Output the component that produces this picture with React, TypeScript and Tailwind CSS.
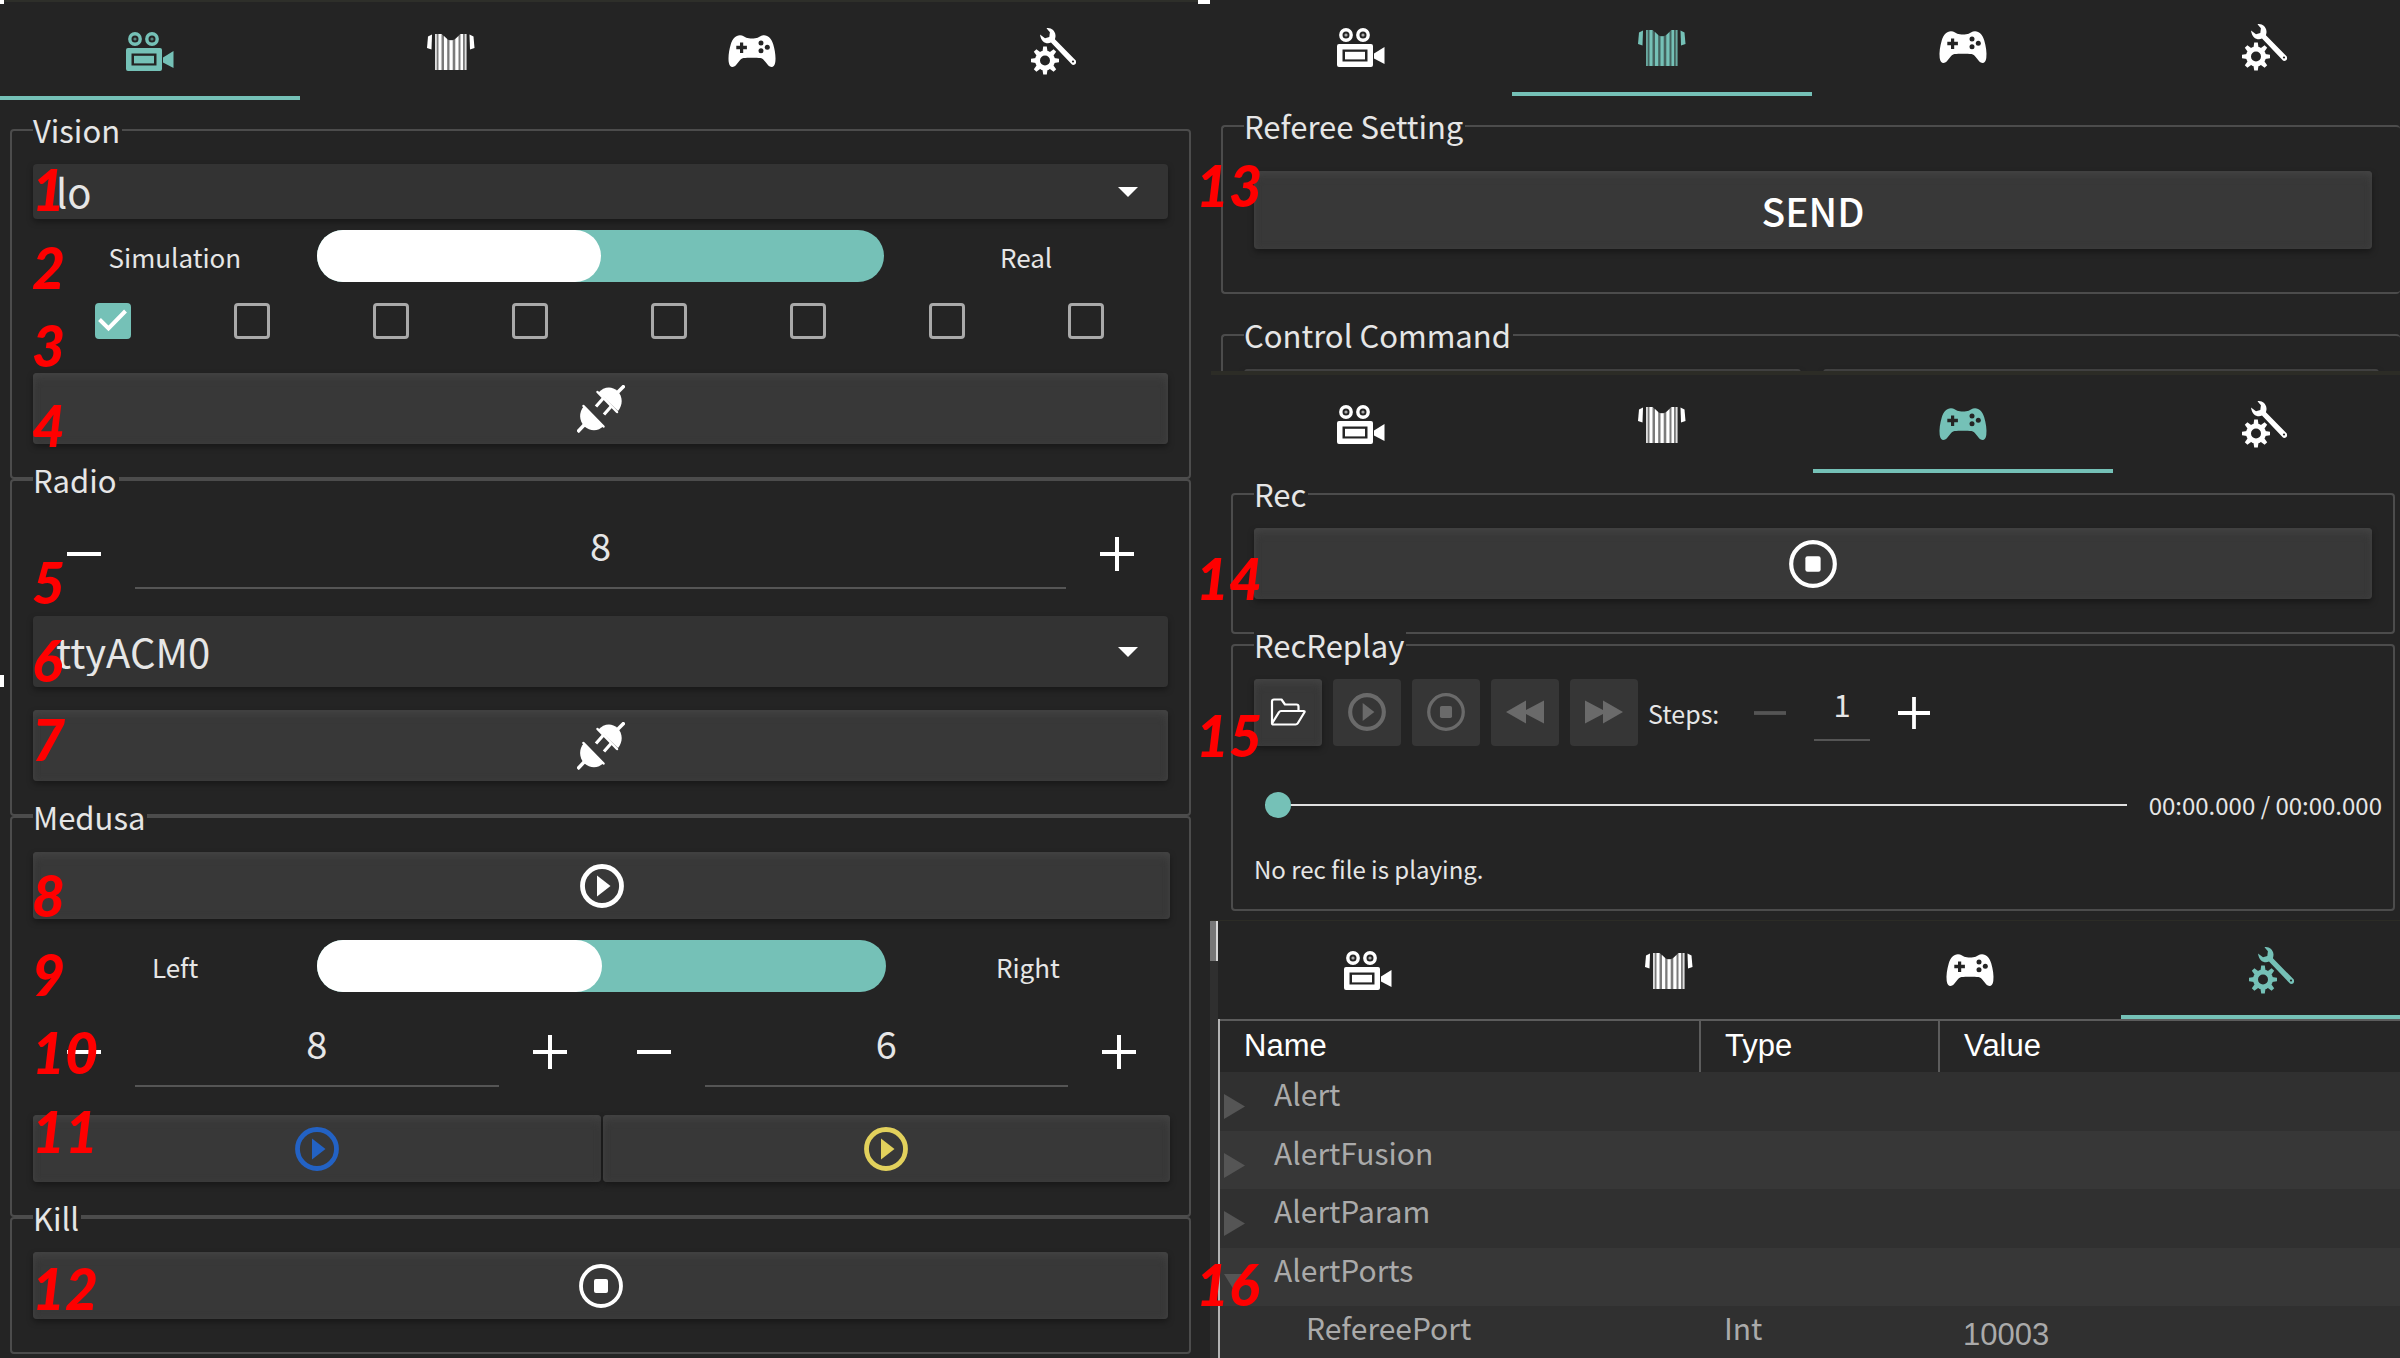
import { useState } from "react";
import type { ReactNode } from "react";

type IconProps = { className?: string };

function CameraIcon({ className = "size-12" }: IconProps) {
  return (
    <svg viewBox="0 0 48 48" className={className} fill="currentColor" aria-hidden="true">
      <circle cx="9" cy="12" r="5.2" fill="none" stroke="currentColor" strokeWidth="3.4" />
      <circle cx="9" cy="12" r="1.6" opacity=".6" />
      <circle cx="26" cy="12" r="5.2" fill="none" stroke="currentColor" strokeWidth="3.4" />
      <circle cx="26" cy="12" r="1.6" opacity=".6" />
      <path
        fillRule="evenodd"
        d="M2 21h32a2 2 0 0 1 2 2v19a2 2 0 0 1-2 2H2a2 2 0 0 1-2-2V23a2 2 0 0 1 2-2zM5.5 26.5v12h25v-12z"
      />
      <rect x="8" y="28.8" width="20" height="7.6" />
      <path d="M37 30.5l10.5-6.5v17L37 35.500z" />
    </svg>
  );
}

function JerseyIcon({ className = "size-12" }: IconProps) {
  return (
    <svg viewBox="0 0 48 48" className={className} fill="currentColor" aria-hidden="true">
      <path d="M5 7.500L1 9.500 0 21l4.500 1.500z" />
      <path d="M42.500 7.500l4 2L47.500 21 43 22.500z" />
      <path opacity=".4" d="M8 7h6.500c3 2 4 6.200 9.500 6.200s6.500-4.200 9.500-6.200H39.500V43H8z" />
      <path opacity=".75" d="M8 7h1.800v36H8zM37.800 7h1.700v36h-1.700z" />
      <path d="M11.500 7h3V43h-3zM17 9l3.200 3V43H17zM22.500 13.200h3.200V43h-3.200zM28.300 12l3.200-3V43h-3.200zM33.500 7h2.500V43h-2.500z" />
    </svg>
  );
}

function GamepadIcon({ className = "size-12" }: IconProps) {
  return (
    <svg viewBox="0 0 48 48" className={className} fill="currentColor" aria-hidden="true">
      <path
        fillRule="evenodd"
        d="M12 8.300c3 0 4.500 1.500 6.300 2.500 3 .9 8.400.9 11.400 0 1.800-1 3.300-2.500 6.300-2.500 4.500 0 7.500 3.500 9.200 9 1.700 5.500 2.800 12.700 2.100 17.700-.5 3.600-1.800 5-3.800 5-2.500 0-4-2.500-6-5-1.700-2.100-3-3.800-5-4-4-.4-13-.4-17 0-2 .2-3.300 1.900-5 4-2 2.500-3.500 5-6 5-2 0-3.300-1.400-3.800-5-.7-5 .4-12.200 2.100-17.700 1.700-5.500 4.700-9 9.200-9zM12 15.500v3.200H8.300v3.600H12v3.600h3.200v-3.600h3.700v-3.600h-3.700v-3.200z"
      />
      <g fill="#242424">
        <circle cx="33" cy="16" r="2.500" />
        <circle cx="39.300" cy="20.300" r="2.500" />
        <circle cx="33" cy="23.800" r="2.500" />
      </g>
    </svg>
  );
}

const gearTeeth = [0, 45, 90, 135, 180, 225, 270, 315];

function ToolsIcon({ className = "size-12" }: IconProps) {
  return (
    <svg viewBox="0 0 48 48" className={className} fill="currentColor" aria-hidden="true">
      <circle cx="16" cy="33.500" r="7.500" fill="none" stroke="currentColor" strokeWidth="5" />
      {gearTeeth.map((a) => (
        <path key={a} d="M14.200 19.500h3.600l.7 5h-5z" transform={`rotate(${a} 16 33.500)`} />
      ))}
      <path d="M17.500 1.200c4.600-.8 8.700 2.600 9 7.200.1 1.500-.3 2.800-.6 3.800L46.800 33.600c1 3.300-.6 4.800-3.600 4.200L22 15.600c-4.500 2-10-.5-11-8.200l5 3.800 4.300-1.300.6-4.700z" />
      <circle cx="44" cy="34.500" r="1.100" fill="#242424" />
    </svg>
  );
}

function PlugIcon({ className = "size-12" }: IconProps) {
  return (
    <svg viewBox="0 0 48 48" className={className} fill="currentColor" stroke="currentColor" aria-hidden="true">
      <path strokeWidth="2.500" strokeLinecap="round" d="M6.500 21L26.500 41.500" />
      <path stroke="none" d="M7 21l19.500 20c-5 5.500-13.500 5.500-19 .5C2 36 1.500 27 7 21z" />
      <path strokeWidth="3.500" d="M9 38l-8.500 9" />
      <path strokeWidth="2.500" strokeLinecap="round" d="M20.500 7L40 27" />
      <path stroke="none" d="M21.500 7.500c5-6 13.500-7 19-1.500s5.500 14 .5 20z" />
      <path strokeWidth="3.500" d="M38 10l9.500-9.500" />
      <path strokeWidth="3.200" d="M26.500 13L19 21.500M34.500 21L27 29.500" />
    </svg>
  );
}

function PlayIcon({ className = "size-11" }: IconProps) {
  return (
    <svg viewBox="0 0 44 44" className={className} fill="currentColor" aria-hidden="true">
      <circle cx="22" cy="22" r="19.500" fill="none" stroke="currentColor" strokeWidth="4.800" />
      <path d="M17 11.500L30.500 22 17 32.500z" />
    </svg>
  );
}

function StopIcon({ className = "size-11" }: IconProps) {
  return (
    <svg viewBox="0 0 44 44" className={className} fill="currentColor" aria-hidden="true">
      <circle cx="22" cy="22" r="20" fill="none" stroke="currentColor" strokeWidth="3.800" />
      <rect x="15" y="15" width="14" height="14" rx="2" />
    </svg>
  );
}

function RewindIcon() {
  return (
    <svg viewBox="0 0 38 24" className="h-6 w-[38px]" fill="currentColor" aria-hidden="true">
      <path d="M0 12L20 .500v9.500L38 .500v23L20 14v9.500z" />
    </svg>
  );
}

function ForwardIcon() {
  return (
    <svg viewBox="0 0 38 24" className="h-6 w-[38px]" fill="currentColor" aria-hidden="true">
      <path d="M38 12L18 .500v9.500L0 .500v23L18 14v9.500z" />
    </svg>
  );
}

function FolderIcon() {
  return (
    <svg
      viewBox="0 0 36 28"
      className="h-7 w-9"
      fill="none"
      stroke="currentColor"
      strokeWidth="2.200"
      strokeLinejoin="round"
      aria-hidden="true"
    >
      <path d="M2 25V3.500Q2 1.500 4 1.500h7.500l3.500 5h11.500Q28.500 6.500 28.500 8.500V13" />
      <path d="M2 25.500L9 14.200Q9.700 13 11 13h22.500q1.700 0 .8 1.500l-6.500 10.700q-.8 1.300-2.200 1.300H3.500Q2 26.500 2 25z" />
    </svg>
  );
}

const tabs = [
  { label: "Vision", Icon: CameraIcon },
  { label: "Referee", Icon: JerseyIcon },
  { label: "Gamepad", Icon: GamepadIcon },
  { label: "Settings", Icon: ToolsIcon },
];

function TabBar({ active }: { active: number }) {
  return (
    <div role="tablist" className="flex h-24 shrink-0 overflow-hidden">
      {tabs.map(({ label, Icon }, i) => (
        <button
          key={label}
          type="button"
          role="tab"
          aria-label={label}
          aria-selected={i === active}
          className={`mr-px flex min-w-[300px] flex-1 items-center justify-center border-b-4 pt-px ${
            i === active ? "border-[#75c1b7] text-[#75c1b7]" : "border-transparent text-white"
          }`}
        >
          <Icon />
        </button>
      ))}
    </div>
  );
}

function Group({ title, className = "", children }: { title: string; className?: string; children: ReactNode }) {
  return (
    <fieldset className={`min-w-0 rounded-[4px] border-2 border-[#4c4c4c] px-[21px] ${className}`}>
      <legend className="bg-[#242424] pr-0.5 text-[31px] leading-7 text-[#e6e6e6]">{title}</legend>
      {children}
    </fieldset>
  );
}

const raised =
  "bg-[#383838] shadow-[inset_0_6px_8px_-2px_#434343,inset_0_0_6px_#3f3f3f,0_3px_6px_rgba(0,0,0,0.35)]";

function PushButton({ label, className = "", children }: { label: string; className?: string; children: ReactNode }) {
  return (
    <button
      type="button"
      aria-label={label}
      className={`flex w-full items-center justify-center rounded-[4px] text-white ${raised} ${className}`}
    >
      {children}
    </button>
  );
}

function Dropdown({ label, value, className = "" }: { label: string; value: string; className?: string }) {
  return (
    <div className={`relative ${className}`}>
      <select
        aria-label={label}
        className="size-full appearance-none rounded-[4px] bg-[#333333] pb-0.5 pl-[23px] text-[40px] leading-[50px] text-[#e6e6e6] shadow-[0_3px_6px_rgba(0,0,0,0.35)]"
      >
        <option>{value}</option>
      </select>
      <svg
        viewBox="0 0 20 10"
        className="pointer-events-none absolute top-1/2 right-[30px] h-2.5 w-5 -translate-y-1/2 text-white"
        fill="currentColor"
        aria-hidden="true"
      >
        <path d="M0 0h20L10 10z" />
      </svg>
    </div>
  );
}

function SwitchRow({ left, right, className = "" }: { left: string; right: string; className?: string }) {
  const [on, setOn] = useState(false);
  return (
    <div className={`grid grid-cols-[1fr_2fr_1fr] items-center text-center text-[26px] leading-8 text-[#e6e6e6] ${className}`}>
      <span className="pt-0.5">{left}</span>
      <button
        type="button"
        role="switch"
        aria-checked={on}
        aria-label={`${left} or ${right}`}
        onClick={() => setOn(!on)}
        className={`flex h-[52px] rounded-full bg-[#75c1b7] ${on ? "justify-end" : "justify-start"}`}
      >
        <span className="h-full w-1/2 rounded-full bg-white" />
      </button>
      <span className="pt-0.5">{right}</span>
    </div>
  );
}

function Cross({ plus, className }: { plus: boolean; className: string }) {
  return (
    <svg viewBox="0 0 34 34" className={className} stroke="currentColor" strokeWidth="4" aria-hidden="true">
      <path d={plus ? "M0 17h34M17 0v34" : "M0 17h34"} />
    </svg>
  );
}

function Spinner({ label, initial, className = "" }: { label: string; initial: number; className?: string }) {
  const [value, setValue] = useState(initial);
  return (
    <div className={`flex h-[70px] text-white ${className}`}>
      <button type="button" aria-label={`Decrease ${label}`} onClick={() => setValue(value - 1)} className="flex w-[102px] items-center justify-center">
        <Cross plus={false} className="size-[34px]" />
      </button>
      <input
        aria-label={label}
        value={value}
        onChange={(e) => setValue(Number(e.target.value) || 0)}
        className="min-w-0 flex-1 border-b-2 border-[#555555] pb-[18px] text-center text-[38px] text-[#e6e6e6] outline-none"
      />
      <button type="button" aria-label={`Increase ${label}`} onClick={() => setValue(value + 1)} className="flex w-[102px] items-center justify-center">
        <Cross plus className="size-[34px]" />
      </button>
    </div>
  );
}

function CameraCheck({ index }: { index: number }) {
  const [on, setOn] = useState(index === 0);
  return (
    <label className="relative flex size-9 items-center justify-center">
      <input
        type="checkbox"
        aria-label={`Camera ${index}`}
        checked={on}
        onChange={() => setOn(!on)}
        className="size-9 appearance-none rounded-[4px] border-[3px] border-[#a9a9a9] checked:border-[#75c1b7] checked:bg-[#75c1b7]"
      />
      {on && (
        <svg viewBox="0 0 36 36" className="pointer-events-none absolute inset-0" fill="none" stroke="#ffffff" strokeWidth="4" aria-hidden="true">
          <path d="M4.500 16.500l9 9L30.500 8" />
        </svg>
      )}
    </label>
  );
}

function VisionPanel() {
  return (
    <section className="w-1/2 shrink-0 border-t-2 border-[#2e2f2a] pt-0.5">
      <TabBar active={0} />
      <div className="mr-[9px] ml-2.5 pt-4">
        <Group title="Vision" className="pb-[33px]">
          <Dropdown label="Network interface" value="lo" className="mt-5 h-[55px]" />
          <SwitchRow left="Simulation" right="Real" className="mt-[11px]" />
          <div className="mt-[21px] grid grid-cols-8 justify-items-center pr-3 pl-2.5">
            {[0, 1, 2, 3, 4, 5, 6, 7].map((i) => (
              <CameraCheck key={i} index={i} />
            ))}
          </div>
          <PushButton label="Connect vision" className="mt-[34px] h-[71px]">
            <PlugIcon />
          </PushButton>
        </Group>
        <Group title="Radio" className="-mt-[13px] pb-[33px]">
          <Spinner label="Radio channel" initial={8} className="mt-[25px]" />
          <Dropdown label="Serial port" value="ttyACM0" className="mt-[27px] h-[71px]" />
          <PushButton label="Connect radio" className="mt-[23px] h-[71px]">
            <PlugIcon />
          </PushButton>
        </Group>
        <Group title="Medusa" className="-mt-[13px] pb-[33px]">
          <div className="-mr-0.5">
            <PushButton label="Start Medusa" className="mt-[21px] h-[67px]">
              <PlayIcon />
            </PushButton>
            <SwitchRow left="Left" right="Right" className="mt-[21px]" />
            <div className="mt-[25px] grid grid-cols-2 gap-0.5">
              <Spinner label="Blue robots" initial={8} />
              <Spinner label="Yellow robots" initial={6} />
            </div>
            <div className="mt-7 grid grid-cols-2 gap-0.5">
              <PushButton label="Start blue" className="h-[67px]">
                <PlayIcon className="size-11 text-[#2362c4]" />
              </PushButton>
              <PushButton label="Start yellow" className="h-[67px]">
                <PlayIcon className="size-11 text-[#e2d15c]" />
              </PushButton>
            </div>
          </div>
        </Group>
        <Group title="Kill" className="-mt-[13px] pb-[33px]">
          <PushButton label="Kill all" className="mt-5 h-[67px]">
            <StopIcon />
          </PushButton>
        </Group>
      </div>
    </section>
  );
}

function RefereePanel() {
  return (
    <section className="h-[375px] shrink-0 overflow-hidden border-b-4 border-[#2c2c26]">
      <TabBar active={1} />
      <div className="ml-2.5 pt-4">
        <Group title="Referee Setting" className="border-r-0 pb-[43px]">
          <div className="mr-[7px] ml-2.5 pt-[31px]">
            <PushButton label="Send" className="h-[78px] text-[39px] font-medium">
              SEND
            </PushButton>
          </div>
        </Group>
        <Group title="Control Command" className="mt-[27px] border-r-0 pb-[43px]">
          <div className="mt-5 grid grid-cols-2 gap-[22px]">
            <PushButton label="Halt" className="h-[78px]">
              {null}
            </PushButton>
            <PushButton label="Stop" className="h-[78px]">
              {null}
            </PushButton>
          </div>
        </Group>
      </div>
    </section>
  );
}

function ToolButton({ label, disabled = false, children }: { label: string; disabled?: boolean; children: ReactNode }) {
  return (
    <button
      type="button"
      aria-label={label}
      disabled={disabled}
      className={`flex h-[67px] w-[68px] items-center justify-center rounded-[4px] pb-0.5 ${
        disabled ? "bg-[#363636] text-[#6a6a6a]" : `text-white ${raised}`
      }`}
    >
      {children}
    </button>
  );
}

function RecordPanel() {
  const [pos, setPos] = useState(0);
  return (
    <section className="shrink-0 pt-0.5">
      <TabBar active={2} />
      <div className="mr-[5px] ml-5 pt-[7px]">
        <Group title="Rec" className="pb-[33px]">
          <PushButton label="Stop recording" className="mt-5 h-[71px]">
            <StopIcon className="size-12" />
          </PushButton>
        </Group>
        <Group title="RecReplay" className="-mt-[3px] pb-[26px]">
          <div className="mt-5 flex items-center text-white">
            <div className="flex gap-[11px]">
              <ToolButton label="Open record">
                <FolderIcon />
              </ToolButton>
              <ToolButton label="Play" disabled>
                <PlayIcon className="size-[38px]" />
              </ToolButton>
              <ToolButton label="Stop" disabled>
                <StopIcon className="size-[38px]" />
              </ToolButton>
              <ToolButton label="Rewind" disabled>
                <RewindIcon />
              </ToolButton>
              <ToolButton label="Forward" disabled>
                <ForwardIcon />
              </ToolButton>
            </div>
            <label htmlFor="steps" className="ml-2.5 w-[88px] text-[25px] leading-8 text-[#e6e6e6]">
              Steps:
            </label>
            <button type="button" aria-label="Fewer steps" disabled className="mr-2.5 flex h-[67px] w-[68px] items-center justify-center text-[#555555]">
              <Cross plus={false} className="size-8" />
            </button>
            <input
              id="steps"
              defaultValue="1"
              className="-mt-1 h-[60px] w-14 border-b-2 border-[#555555] pb-3 text-center text-[31px] text-[#e6e6e6] outline-none"
            />
            <button type="button" aria-label="More steps" className="ml-2.5 flex h-[67px] w-[68px] items-center justify-center">
              <Cross plus className="size-8" />
            </button>
          </div>
          <div className="-mr-2.5 mt-[45px] flex h-7 items-center gap-[22px] pl-[11px] text-[24px] leading-7 text-[#e6e6e6]">
            <input
              type="range"
              aria-label="Playback position"
              min={0}
              max={100}
              value={pos}
              onChange={(e) => setPos(Number(e.target.value))}
              className="h-7 min-w-0 flex-1 appearance-none bg-transparent [&::-webkit-slider-runnable-track]:h-0.5 [&::-webkit-slider-runnable-track]:bg-[#e0e0e0] [&::-webkit-slider-thumb]:-mt-3 [&::-webkit-slider-thumb]:size-[26px] [&::-webkit-slider-thumb]:appearance-none [&::-webkit-slider-thumb]:rounded-full [&::-webkit-slider-thumb]:bg-[#75c1b7]"
            />
            <span className="whitespace-nowrap">00:00.000 / 00:00.000</span>
          </div>
          <p className="mt-9 text-[24px] leading-7 text-[#e6e6e6]">No rec file is playing.</p>
        </Group>
      </div>
    </section>
  );
}

const settings = [
  { name: "Alert", open: false },
  { name: "AlertFusion", open: false },
  { name: "AlertParam", open: false },
  { name: "AlertPorts", open: true },
];

function SettingsPanel() {
  return (
    <section className="mt-[9px] flex min-h-0 flex-1 border-t border-[#2c2c26]">
      <div className="-ml-px w-2 shrink-0 bg-[#2f2f2f]">
        <div className="h-10 border-r-2 border-[#d8d8d8] bg-[#777777]" />
      </div>
      <div className="flex min-w-0 flex-1 flex-col pt-0.5">
        <TabBar active={3} />
        <div className="min-h-0 flex-1 overflow-hidden border-l-2 border-[#b4b4b4]">
          <table className="w-full table-fixed border-collapse text-left text-[30px] text-[#aaaaaa]">
            <colgroup>
              <col className="w-[480px]" />
              <col className="w-[239px]" />
              <col />
            </colgroup>
            <thead>
              <tr className="h-[52px] bg-[#262626] font-[Liberation_Sans] text-[31px] text-white">
                <th className="border-t-2 border-r-2 border-[#5c5c5c] pl-6 font-normal">Name</th>
                <th className="border-t-2 border-r-2 border-[#5c5c5c] pl-6 font-normal">Type</th>
                <th className="border-t-2 border-[#5c5c5c] pl-6 font-normal">Value</th>
              </tr>
            </thead>
            <tbody>
              {settings.map(({ name, open }) => (
                <tr key={name} className="h-[58px] bg-[#373737] align-top odd:h-[59px] odd:bg-[#303030]">
                  <td>
                    <div className="flex items-start gap-[29px] pl-1">
                      <button type="button" aria-label={`Toggle ${name}`} aria-expanded={open} className="mt-[22px] text-[#555555]">
                        <svg viewBox="0 0 21 25" className="h-[25px] w-[21px]" fill="currentColor" aria-hidden="true">
                          <path d={open ? "M0 4h21L10.500 21z" : "M0 0l21 12.500L0 25z"} />
                        </svg>
                      </button>
                      <span className="leading-[43px]">{name}</span>
                    </div>
                  </td>
                  <td />
                  <td />
                </tr>
              ))}
              <tr className="h-[59px] bg-[#303030] align-top">
                <td className="pl-[86px] leading-[43px]">RefereePort</td>
                <td className="pl-6 leading-[43px]">Int</td>
                <td className="pl-6 font-[Liberation_Sans] text-[31px] leading-[57px]">10003</td>
              </tr>
            </tbody>
          </table>
        </div>
      </div>
    </section>
  );
}

const leftNotes = [
  { n: 1, y: 189 },
  { n: 2, y: 267 },
  { n: 3, y: 345 },
  { n: 4, y: 425 },
  { n: 5, y: 582 },
  { n: 6, y: 660 },
  { n: 7, y: 739 },
  { n: 8, y: 895 },
  { n: 9, y: 974 },
  { n: 10, y: 1052 },
  { n: 11, y: 1131 },
  { n: 12, y: 1288 },
];

const rightNotes = [
  { n: 13, y: 185 },
  { n: 14, y: 578 },
  { n: 15, y: 735 },
  { n: 16, y: 1284 },
];

function Note({ n, y, className }: { n: number; y: number; className: string }) {
  return (
    <span
      style={{ top: y }}
      className={`absolute -translate-y-1/2 font-[Lato] text-[57px] leading-none font-black text-[#ff0000] italic ${className}`}
    >
      {n}
    </span>
  );
}

export default function App() {
  return (
    <main className="relative flex h-screen overflow-hidden bg-[#242424] font-['Noto_Sans_CJK_JP','Noto_Sans_CJK_SC',sans-serif]">
      <VisionPanel />
      <div className="flex min-w-0 flex-1 flex-col pl-[11px]">
        <RefereePanel />
        <RecordPanel />
        <SettingsPanel />
      </div>
      <div className="pointer-events-none absolute inset-0">
        <span className="absolute top-0 left-0 size-1 bg-white" />
        <span className="absolute top-0 left-1/2 h-1 w-3 -translate-x-0.5 bg-white" />
        <span className="absolute top-[675px] left-0 h-3 w-1 bg-white" />
        {leftNotes.map((note) => (
          <Note key={note.n} {...note} className="left-8" />
        ))}
        {rightNotes.map((note) => (
          <Note key={note.n} {...note} className="left-1/2 -ml-1" />
        ))}
      </div>
    </main>
  );
}
